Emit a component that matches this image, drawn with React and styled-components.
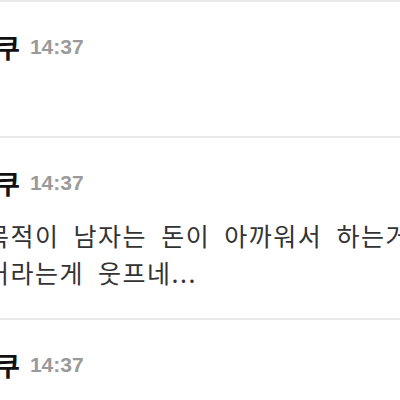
import React from 'react';
import styled, { createGlobalStyle } from 'styled-components';

const GlobalStyle = createGlobalStyle`
  html, body {
    margin: 0;
    padding: 0;
    background: #fff;
  }
  body {
    width: 400px;
    height: 400px;
    overflow: hidden;
    font-family: "Noto Sans CJK KR", "Noto Sans", sans-serif;
  }
`;

const comments = [
  { name: '쿠', time: '14:37', lines: [], empty: true },
  {
    name: '쿠',
    time: '14:37',
    lines: ['목적이 남자는 돈이 아까워서 하는거', '거라는게 웃프네...'],
  },
  { name: '쿠', time: '14:37', lines: ['그런데 이건 또 무슨 얘기인지 모르겠다'] },
];

const App = () => {
  return (
    <>
      <GlobalStyle />
      <List>
        {comments.map((c, i) => (
          <Comment key={i} $empty={c.empty}>
            <Header>
              <Name>{c.name}</Name>
              <Time>{c.time}</Time>
            </Header>
            {c.lines.length > 0 && (
              <Body>
                {c.lines.map((l, j) => (
                  <Line key={j}>{l}</Line>
                ))}
              </Body>
            )}
          </Comment>
        ))}
      </List>
    </>
  );
};

const List = styled.div`
  display: flex;
  flex-direction: column;
  width: 400px;
  overflow: hidden;
`;

const Comment = styled.div`
  border-top: 2px solid #e9e9e9;
  padding: 30px 0 ${(p) => (p.$empty ? '74px' : '27px')};
`;

const Header = styled.div`
  display: flex;
  align-items: center;
  height: 30px;
  margin-left: -4px;
`;

const Name = styled.span`
  font-size: 26px;
  font-weight: 700;
  color: #111;
  line-height: 30px;
`;

const Time = styled.span`
  margin-left: 10px;
  font-family: "Liberation Sans", Arial, sans-serif;
  font-size: 21px;
  font-weight: 700;
  color: #9a9a9a;
  line-height: 30px;
`;

const Body = styled.div`
  margin-top: 19px;
  margin-left: -14px;
  white-space: nowrap;
  font-size: 25px;
  letter-spacing: 1.5px;
  word-spacing: 7px;
  line-height: 37px;
  color: #333;
`;

const Line = styled.div``;

export default App;
